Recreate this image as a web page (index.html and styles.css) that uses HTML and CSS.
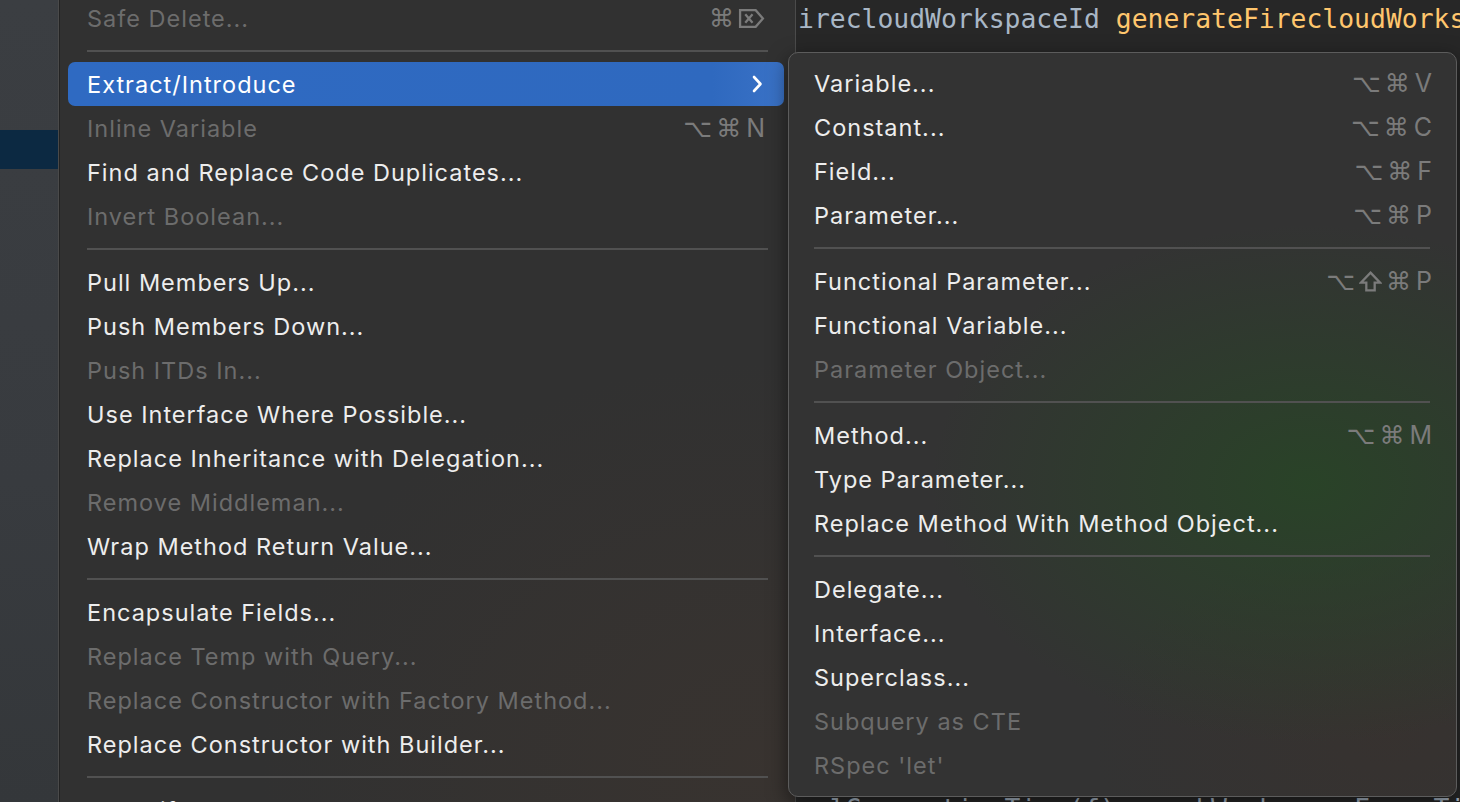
FILE: index.html
```html
<!DOCTYPE html>
<html>
<head>
<meta charset="utf-8">
<link rel="stylesheet" href="styles.css">
</head>
<body>
<div class="screen">
  <aside class="sidebar"><div class="sidebar-sel"></div></aside>

  <nav class="menu">
    <ul class="items">
      <li class="item disabled"><span>Safe Delete...</span><span class="keys"><span class="sym">⌘</span><svg class="del" viewBox="0 0 26 20" width="27" height="21"><path d="M2 2 H17 L24 10 L17 18 H2 Z" fill="none" stroke="currentColor" stroke-width="2.2" stroke-linejoin="miter"/><path d="M7 6 L14 14 M14 6 L7 14" stroke="currentColor" stroke-width="2.2"/></svg></span></li>
      <li class="sep"></li>
      <li class="item active"><span>Extract/Introduce</span><svg class="chev" viewBox="0 0 12 20" width="12" height="20"><path d="M3 3 L9.5 10 L3 17" fill="none" stroke="#ffffff" stroke-width="2.6" stroke-linecap="round" stroke-linejoin="round"/></svg></li>
      <li class="item disabled"><span>Inline Variable</span><span class="keys"><span class="sym">⌥</span><span class="sym">⌘</span><span class="k">N</span></span></li>
      <li class="item"><span>Find and Replace Code Duplicates...</span></li>
      <li class="item disabled"><span>Invert Boolean...</span></li>
      <li class="sep"></li>
      <li class="item"><span>Pull Members Up...</span></li>
      <li class="item"><span>Push Members Down...</span></li>
      <li class="item disabled"><span>Push ITDs In...</span></li>
      <li class="item"><span>Use Interface Where Possible...</span></li>
      <li class="item"><span>Replace Inheritance with Delegation...</span></li>
      <li class="item disabled"><span>Remove Middleman...</span></li>
      <li class="item"><span>Wrap Method Return Value...</span></li>
      <li class="sep"></li>
      <li class="item"><span>Encapsulate Fields...</span></li>
      <li class="item disabled"><span>Replace Temp with Query...</span></li>
      <li class="item disabled"><span>Replace Constructor with Factory Method...</span></li>
      <li class="item"><span>Replace Constructor with Builder...</span></li>
      <li class="sep"></li>
      <li class="item"><span>Generify...</span></li>
    </ul>
  </nav>

  <main class="editor">
    <div class="code"><span class="id">irecloudWorkspaceId</span> <span class="fn">generateFirecloudWorkspaceId</span><span class="id">()</span></div>
    <div class="code bottom"><span class="id">  lGenerationTime(f)  mockWorkspaceFor  Ti</span></div>
  </main>

  <div class="submenu">
    <ul class="items sub">
      <li class="item"><span>Variable...</span><span class="keys"><span class="sym">⌥</span><span class="sym">⌘</span><span class="k">V</span></span></li>
      <li class="item"><span>Constant...</span><span class="keys"><span class="sym">⌥</span><span class="sym">⌘</span><span class="k">C</span></span></li>
      <li class="item"><span>Field...</span><span class="keys"><span class="sym">⌥</span><span class="sym">⌘</span><span class="k">F</span></span></li>
      <li class="item"><span>Parameter...</span><span class="keys"><span class="sym">⌥</span><span class="sym">⌘</span><span class="k">P</span></span></li>
      <li class="sep"></li>
      <li class="item"><span>Functional Parameter...</span><span class="keys"><span class="sym">⌥</span><svg class="shift" viewBox="0 0 22 22" width="23" height="23"><path d="M11 2.5 L20 12 H15 V19.5 H7 V12 H2 Z" fill="none" stroke="currentColor" stroke-width="2.2" stroke-linejoin="miter"/></svg><span class="sym">⌘</span><span class="k">P</span></span></li>
      <li class="item"><span>Functional Variable...</span></li>
      <li class="item disabled"><span>Parameter Object...</span></li>
      <li class="sep"></li>
      <li class="item"><span>Method...</span><span class="keys"><span class="sym">⌥</span><span class="sym">⌘</span><span class="k">M</span></span></li>
      <li class="item"><span>Type Parameter...</span></li>
      <li class="item"><span>Replace Method With Method Object...</span></li>
      <li class="sep"></li>
      <li class="item"><span>Delegate...</span></li>
      <li class="item"><span>Interface...</span></li>
      <li class="item"><span>Superclass...</span></li>
      <li class="item disabled"><span>Subquery as CTE</span></li>
      <li class="item disabled"><span>RSpec 'let'</span></li>
    </ul>
  </div>
</div>
</body>
</html>
```

FILE: styles.css
```css
* { box-sizing: border-box; }

html, body {
  margin: 0;
  padding: 0;
  width: 1460px;
  height: 802px;
  overflow: hidden;
  background: #272727;
}

.screen {
  position: relative;
  display: flex;
  width: 1460px;
  height: 802px;
  overflow: hidden;
  font-family: "Inter", "Noto Sans", sans-serif;
}

.sidebar {
  width: 58px;
  flex: none;
  padding-top: 130px;
  background: linear-gradient(180deg, #3b3e42 0%, #383b3f 60%, #34373a 100%);
}

.sidebar-sel {
  height: 39px;
  background: #0c2942;
}

.menu {
  width: 738px;
  flex: none;
  background:
    radial-gradient(ellipse 500px 400px at 95% 95%, rgba(70, 55, 45, 0.35), transparent),
    #313131;
  border-left: 1px solid #4a4a4a;
  box-shadow: inset 1px 0 0 #232323;
  border-right: 1px solid #4b4b4b;
}

.items {
  list-style: none;
  margin: -4px 0 0 0;
  padding: 0;
}

.item {
  height: 44px;
  margin: 0 11px 0 9px;
  padding: 0 19px 0 19px;
  border-radius: 7px;
  display: flex;
  align-items: center;
  justify-content: space-between;
  font-size: 23.5px;
  letter-spacing: 1px;
  color: #ededed;
  white-space: nowrap;
}

.item.disabled {
  color: #6c6c6c;
}

.item.active {
  background: linear-gradient(90deg, #2f6ac2 0%, #2f69bf 90%, #3a72c6 100%);
  color: #ffffff;
}

.sep {
  height: 22px;
  margin: 0 27px 0 28px;
  display: flex;
  align-items: center;
}

.sep::before {
  content: "";
  display: block;
  width: 100%;
  height: 2px;
  background: #515151;
}

.chev {
  margin-right: 2px;
}

.keys {
  display: flex;
  align-items: center;
  gap: 4px;
  color: #7b7b7b;
  letter-spacing: 0;
}

.sym {
  font-family: "DejaVu Sans", sans-serif;
  font-size: 25px;
}

.k {
  font-family: "Inter", sans-serif;
  font-size: 25px;
  margin-left: 1px;
}

.del, .shift {
  display: block;
}

.editor {
  flex: 1;
  background: #272727;
  padding-left: 2px;
  font-family: "DejaVu Sans Mono", monospace;
  font-size: 26.4px;
  line-height: 38px;
}

.code {
  white-space: pre;
  height: 38px;
}

.code.bottom {
  margin-top: 752px;
}

.id { color: #a9b7c6; }
.fn { color: #ffc66d; }

.submenu {
  position: absolute;
  left: 788px;
  top: 52px;
  width: 669px;
  height: 745px;
  border: 1.5px solid #5c5c5c;
  border-radius: 10px;
  padding: 8px 0;
  background:
    radial-gradient(ellipse 380px 260px at 78% 58%, rgba(38, 72, 36, 0.75), transparent),
    radial-gradient(ellipse 300px 200px at 90% 92%, rgba(60, 48, 42, 0.4), transparent),
    #333333;
  box-shadow: 0 6px 20px rgba(0, 0, 0, 0.5);
}

.items.sub {
  margin: 0;
}

.sub .item {
  margin: 0;
  padding: 0 24px 0 25px;
}

.sub .sep {
  margin: 0 26px 0 25px;
}
```
